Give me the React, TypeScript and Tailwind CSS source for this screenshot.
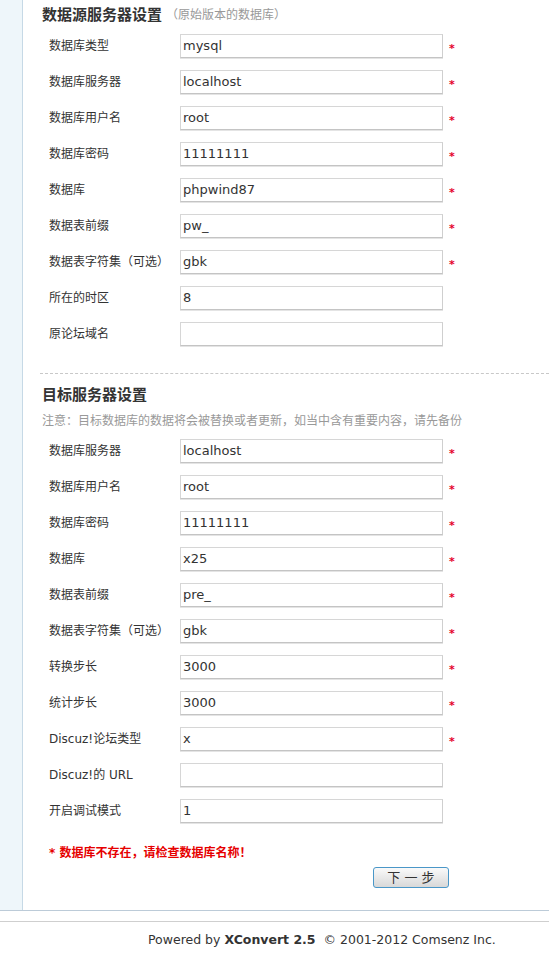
import React from "react";

const F = '"DejaVu Sans", "Noto Sans CJK SC", sans-serif';

type Row = { label: string; value: string; req: boolean };

const src: Row[] = [
  { label: "数据库类型", value: "mysql", req: true },
  { label: "数据库服务器", value: "localhost", req: true },
  { label: "数据库用户名", value: "root", req: true },
  { label: "数据库密码", value: "11111111", req: true },
  { label: "数据库", value: "phpwind87", req: true },
  { label: "数据表前缀", value: "pw_", req: true },
  { label: "数据表字符集（可选）", value: "gbk", req: true },
  { label: "所在的时区", value: "8", req: false },
  { label: "原论坛域名", value: "", req: false },
];

const dst: Row[] = [
  { label: "数据库服务器", value: "localhost", req: true },
  { label: "数据库用户名", value: "root", req: true },
  { label: "数据库密码", value: "11111111", req: true },
  { label: "数据库", value: "x25", req: true },
  { label: "数据表前缀", value: "pre_", req: true },
  { label: "数据表字符集（可选）", value: "gbk", req: true },
  { label: "转换步长", value: "3000", req: true },
  { label: "统计步长", value: "3000", req: true },
  { label: "Discuz!论坛类型", value: "x", req: true },
  { label: "Discuz!的 URL", value: "", req: false },
  { label: "开启调试模式", value: "1", req: false },
];

function FormRow({ r }: { r: Row }) {
  return (
    <div className="flex h-[36px] items-center pl-[7px]">
      <div className="w-[131px] text-[12px] text-[#333]">{r.label}</div>
      <div className="h-[24px] w-[263px] border border-[#d6d6d6] border-b-[#c4c4c4] border-r-[#cfcfcf] bg-white pl-[2px] text-[13px] leading-[22px] text-[#333] shadow-[0_1px_0_#e4e4e4]">
        {r.value}
      </div>
      {r.req && (
        <span className="ml-[6px] mt-[4px] text-[11px] font-bold leading-none text-[#e4002b]">*</span>
      )}
    </div>
  );
}

export default function App() {
  return (
    <div className="w-[549px] bg-white" style={{ fontFamily: F }}>
      <div className="flex border-b border-[#bccbd8]">
        <div className="w-[23px] shrink-0 border-r border-[#c6d9e6] bg-[#eef6fa]" />
        <div className="flex-1 pl-[19px]">
          <div className="flex h-[28px] items-center pt-[2px]">
            <span className="text-[15px] font-bold text-[#333]">数据源服务器设置</span>
            <span className="ml-[4px] text-[12px] text-[#999]">（原始版本的数据库）</span>
          </div>
          {src.map((r, i) => (
            <FormRow key={i} r={r} />
          ))}
          <div className="-ml-[2px] mt-[21px] border-t border-dashed border-[#c8c8c8]" />
          <div className="flex h-[34px] items-end pb-[2px]">
            <span className="text-[15px] font-bold text-[#333]">目标服务器设置</span>
          </div>
          <div className="flex h-[25px] items-center text-[12px] text-[#999]">
            注意：目标数据库的数据将会被替换或者更新，如当中含有重要内容，请先备份
          </div>
          {dst.map((r, i) => (
            <FormRow key={i} r={r} />
          ))}
          <div className="flex h-[36px] items-center pl-[7px] pt-[12px] text-[12px] font-bold text-[#e60000]">
            * 数据库不存在，请检查数据库名称！
          </div>
          <div className="flex pl-[331px] pt-[2px] pb-[22px]">
            <button className="h-[21px] w-[76px] rounded-[3px] border border-[#4a97c8] bg-gradient-to-b from-[#fafafa] to-[#d8d8d8] text-[13px] leading-none text-[#333]">
              下 一 步
            </button>
          </div>
        </div>
      </div>
      <div className="mt-[10px] border-t border-[#cfcfcf]" />
      <div className="pl-[148px] pt-[9px] pb-[8px] text-[12.5px] text-[#333]">
        Powered by <b>XConvert 2.5</b>&nbsp; © 2001-2012 Comsenz Inc.
      </div>
    </div>
  );
}
